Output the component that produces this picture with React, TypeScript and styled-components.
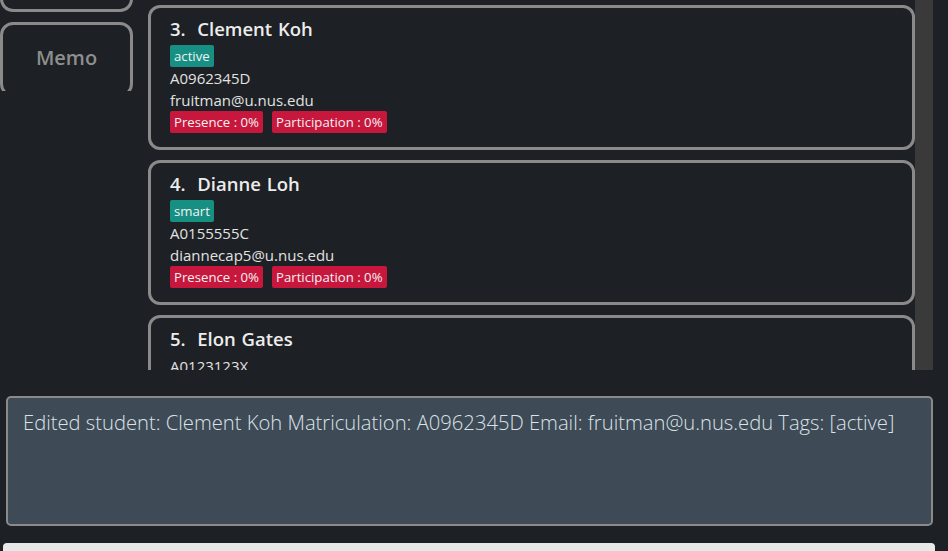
import React from 'react';
import styled, { createGlobalStyle } from 'styled-components';

const GlobalStyle = createGlobalStyle`
  html, body {
    margin: 0;
    padding: 0;
    background: #1d2024;
    font-family: "Open Sans", "Noto Sans", sans-serif;
  }
`;

const Page = styled.div`
  width: 948px;
  height: 551px;
  overflow: hidden;
  display: flex;
  flex-direction: column;
  background: #1d2024;
`;

const TopRow = styled.div`
  height: 370px;
  display: flex;
  flex-shrink: 0;
`;

const SideBar = styled.div`
  width: 148px;
  height: 91px;
  overflow: hidden;
  flex-shrink: 0;
`;

const SideInner = styled.div`
  margin-top: -63px;
  display: flex;
  flex-direction: column;
  gap: 10px;
`;

const SideButton = styled.div`
  width: 133px;
  height: 75px;
  box-sizing: border-box;
  border: 3px solid #8a8a8a;
  border-radius: 13px;
  display: flex;
  align-items: center;
  justify-content: center;
  padding-bottom: 4px;
  color: #8e8e8e;
  font-size: 20px;
  font-weight: 600;
`;

const ListArea = styled.div`
  flex: 1;
  overflow: hidden;
  padding-top: 5px;
  display: flex;
  flex-direction: column;
  gap: 10px;
`;

const Card = styled.div`
  height: 145px;
  flex-shrink: 0;
  box-sizing: border-box;
  border: 3px solid #8a8a8a;
  border-radius: 12px;
  padding: 11px 19px 0;
  color: #e6e6e6;
`;

const Name = styled.div`
  font-size: 18.5px;
  font-weight: 600;
  line-height: 20px;
  color: #ececec;
  white-space: pre;
  word-spacing: 1px;
`;

const Row = styled.div`
  display: flex;
  gap: 9px;
`;

const TagRow = styled(Row)`
  margin-top: 6px;
`;

const Pill = styled.span<{ tone: 'teal' | 'red' }>`
  background: ${p => (p.tone === 'teal' ? '#178f83' : '#c8173d')};
  color: #f2f2f2;
  height: 22px;
  line-height: 22px;
  padding: 0 4px;
  border-radius: 2px;
  font-size: 13.2px;
`;

const Line = styled.div`
  font-size: 15px;
  line-height: 22px;
  color: #e2e2e2;
`;

const Spacer = styled.div`
  height: 6px;
`;

const ScrollTrack = styled.div`
  width: 18px;
  background: #3a3a3a;
  flex-shrink: 0;
`;

const RightGap = styled.div`
  width: 15px;
  flex-shrink: 0;
`;

const ResultBox = styled.div`
  margin: 26px 0 0 6px;
  width: 927px;
  height: 130px;
  box-sizing: border-box;
  background: #3e4a56;
  border: 2px solid #8a8a8a;
  border-radius: 5px;
  padding: 9px 15px;
  color: #dbe2e8;
  font-size: 20.2px;
  font-weight: 300;
  line-height: 30px;
  flex-shrink: 0;
`;

const CommandBox = styled.div`
  margin: 17px 0 0 3px;
  width: 932px;
  height: 30px;
  background: #e8e8e8;
  border-radius: 4px;
  flex-shrink: 0;
`;

type Student = {
  no: number;
  name: string;
  tags: string[];
  matric: string;
  email: string;
};

const students: Student[] = [
  { no: 3, name: 'Clement Koh', tags: ['active'], matric: 'A0962345D', email: 'fruitman@u.nus.edu' },
  { no: 4, name: 'Dianne Loh', tags: ['smart'], matric: 'A0155555C', email: 'diannecap5@u.nus.edu' },
  { no: 5, name: 'Elon Gates', tags: [], matric: 'A0123123X', email: 'elongates@u.nus.edu' },
];

const StudentCard: React.FC<{ s: Student }> = ({ s }) => (
  <Card>
    <Name>{`${s.no}.  ${s.name}`}</Name>
    {s.tags.length > 0 ? (
      <TagRow>
        {s.tags.map(t => (
          <Pill key={t} tone="teal">{t}</Pill>
        ))}
      </TagRow>
    ) : (
      <Spacer />
    )}
    <Line>{s.matric}</Line>
    <Line>{s.email}</Line>
    <Row>
      <Pill tone="red">Presence : 0%</Pill>
      <Pill tone="red">Participation : 0%</Pill>
    </Row>
  </Card>
);

const App: React.FC = () => (
  <Page>
    <GlobalStyle />
    <TopRow>
      <SideBar>
        <SideInner>
          <SideButton>Session</SideButton>
          <SideButton>Memo</SideButton>
        </SideInner>
      </SideBar>
      <ListArea>
        {students.map(s => (
          <StudentCard key={s.no} s={s} />
        ))}
      </ListArea>
      <ScrollTrack />
      <RightGap />
    </TopRow>
    <ResultBox>
      Edited student: Clement Koh Matriculation: A0962345D Email: fruitman@u.nus.edu Tags: [active]
    </ResultBox>
    <CommandBox />
  </Page>
);

export default App;
